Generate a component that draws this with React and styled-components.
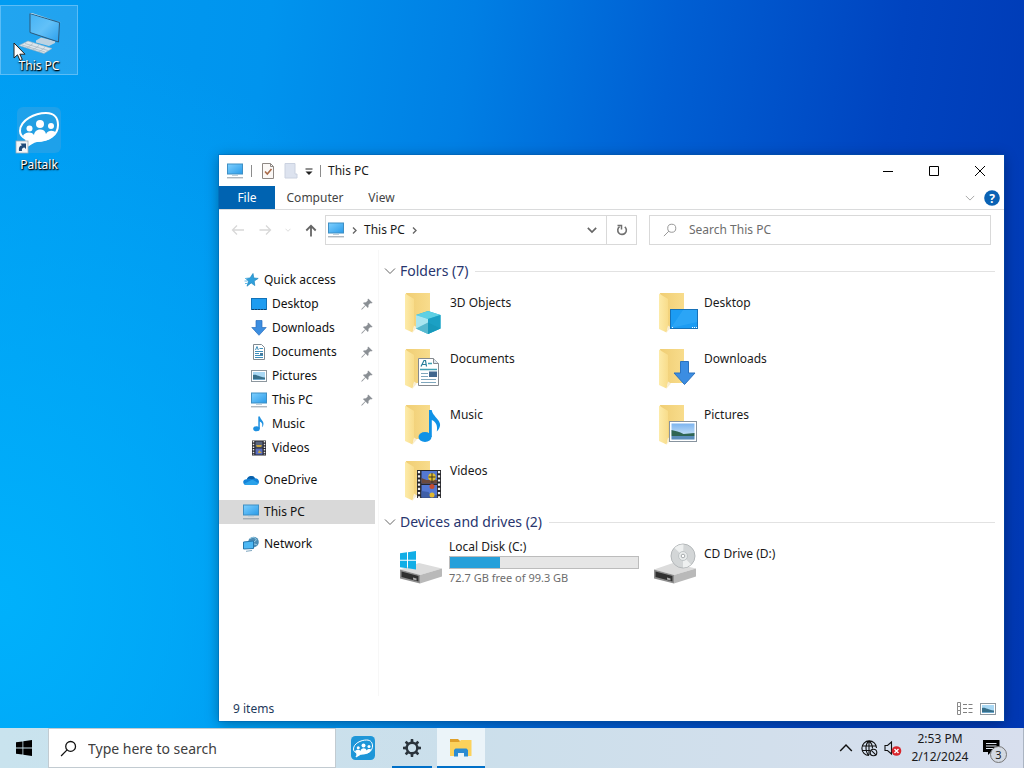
import React from 'react';
import styled, { createGlobalStyle } from 'styled-components';

const GlobalStyle = createGlobalStyle`
  * { box-sizing: border-box; }
  body {
    margin: 0;
    font-family: "Noto Sans", "Open Sans", sans-serif;
    font-size: 12px;
    line-height: 16px;
    color: #1a1a1a;
  }
  button, input { font: inherit; color: inherit; border: 0; padding: 0; margin: 0; background: none; }
  svg { display: block; flex: none; }
  ul { list-style: none; margin: 0; padding: 0; }
  h1, h2, p { margin: 0; font-weight: 400; }
`;

/* ---------- Desktop ---------- */

const Desktop = styled.div`
  position: relative;
  display: flex;
  flex-direction: column;
  min-height: 100vh;
  overflow: hidden;
  background:
    radial-gradient(ellipse 50% 75% at 0% 78%, rgba(0, 178, 252, 0.95), rgba(0, 170, 250, 0) 100%),
    linear-gradient(98deg, #009cf2 0%, #0094ee 24%, #007fe4 42%, #005fd3 60%, #0044c0 80%, #0037b2 100%);
`;

const Shortcuts = styled.main`
  flex: 1;
  display: flex;
  flex-direction: column;
  align-items: flex-start;
  gap: 29px;
  padding-top: 5px;
`;

const Shortcut = styled.button`
  display: flex;
  flex-direction: column;
  align-items: center;
  justify-content: flex-end;
  gap: 2px;
  width: 78px;
  height: 70px;
  color: #fff;
  border: 1px solid ${p => (p.$selected ? 'rgba(130, 205, 250, 0.6)' : 'transparent')};
  background: ${p => (p.$selected ? 'rgba(110, 185, 235, 0.3)' : 'transparent')};
  text-shadow: 0 1px 2px #000, 1px 1px 1px #000;
`;

const Cursor = styled.div`
  position: absolute;
  left: 13px;
  top: 42px;
`;

/* ---------- Explorer window ---------- */

const Window = styled.section`
  position: absolute;
  left: 219px;
  top: 155px;
  right: 20px;
  bottom: 47px;
  display: flex;
  flex-direction: column;
  background: #fff;
  box-shadow: 0 0 0 1px rgba(0, 90, 170, 0.35), 0 2px 12px rgba(0, 0, 0, 0.35);
`;

const TitleBar = styled.header`
  display: flex;
  align-items: center;
  height: 31px;
  padding: 0 1px 0 7px;
`;

const QuickTools = styled.div`
  display: flex;
  align-items: center;
  gap: 7px;
`;

const Divider = styled.span`
  width: 1px;
  height: 12px;
  background: #8c8c8c;
`;

const Title = styled.h1`
  flex: 1;
  padding-left: 7px;
  font-size: 12px;
`;

const IconButton = styled.button`
  display: flex;
  align-items: center;
  justify-content: center;
  width: ${p => p.$w || 16}px;
  height: ${p => p.$h || 16}px;
`;

const Tabs = styled.nav`
  display: flex;
  align-items: stretch;
  height: 24px;
  padding-right: 4px;
  border-bottom: 1px solid #dadbdc;
`;

const Tab = styled.button`
  width: ${p => p.$w}px;
  color: ${p => (p.$active ? '#fff' : '#444')};
  background: ${p => (p.$active ? '#0063b1' : 'transparent')};
`;

const Spacer = styled.span`
  flex: 1;
`;

const AddressRow = styled.div`
  display: flex;
  align-items: center;
  height: 40px;
  padding: 0 13px 0 11px;
`;

const HistoryButtons = styled.div`
  display: flex;
  align-items: center;
  gap: 11px;
  width: 95px;
`;

const AddressBox = styled.div`
  flex: 1;
  display: flex;
  align-items: stretch;
  height: 30px;
  border: 1px solid #d9d9d9;
`;

const Crumbs = styled.div`
  flex: 1;
  display: flex;
  align-items: center;
  gap: 5px;
  padding: 0 6px 0 1px;
`;

const RefreshButton = styled(IconButton)`
  border-left: 1px solid #d9d9d9;
  height: auto;
`;

const SearchBox = styled.label`
  flex: 0 1 342px;
  display: flex;
  align-items: center;
  gap: 12px;
  height: 30px;
  margin-left: 12px;
  padding: 0 13px;
  border: 1px solid #d9d9d9;
`;

const TextInput = styled.input`
  flex: 1;
  min-width: 0;
  outline: none;
  &::placeholder { color: ${p => p.$tone}; opacity: 1; }
`;

const Body = styled.div`
  flex: 1;
  display: flex;
  min-height: 0;
`;

const Sidebar = styled.nav`
  width: 160px;
  padding: 18px 3px 0 0;
  border-right: 1px solid #f7f7f7;
`;

const NavGroup = styled.ul`
  margin-bottom: 8px;
`;

const NavItem = styled.li`
  display: flex;
  align-items: center;
  height: 24px;
  padding: 0 2px 0 ${p => (p.$child ? 31 : 23)}px;
  background: ${p => (p.$selected ? '#d9d9d9' : 'transparent')};
`;

const NavLink = styled.a`
  flex: 1;
  display: flex;
  align-items: center;
  gap: 4px;
  color: #111;
  text-decoration: none;
`;

const NavIcon = styled.span`
  display: flex;
  justify-content: center;
  width: 18px;
`;

const Content = styled.div`
  flex: 1;
  padding: 10px 9px 0 5px;
`;

const GroupHeader = styled.h2`
  display: flex;
  align-items: center;
  gap: 4px;
  height: 22px;
  font-size: 14px;
  color: #28356e;
  &::after {
    content: '';
    flex: 1;
    height: 1px;
    margin-left: 3px;
    background: #e2e2e2;
  }
`;

const Tiles = styled.ul`
  display: grid;
  grid-template-columns: 254px 254px;
  grid-auto-rows: ${p => (p.$drives ? 56 : 56)}px;
  padding: ${p => (p.$drives ? '8px' : '10px')} 0 0 16px;
  margin-bottom: ${p => (p.$drives ? 0 : -5)}px;
`;

const Tile = styled.li`
  display: flex;
  gap: 6px;
  align-items: flex-start;
`;

const TileText = styled.div`
  flex: 1;
  padding: ${p => (p.$drive ? 5 : 3)}px 15px 0 0;
`;

const DriveText = styled.div`
  flex: 1;
  margin: -2px 15px 0 -1px;
`;

const CapacityBar = styled.div`
  height: 13px;
  margin: 1px 0;
  border: 1px solid #bcbcbc;
  background: #e6e6e6;
`;

const CapacityFill = styled.div`
  height: 100%;
  background: #26a0da;
`;

const Muted = styled.p`
  font-size: 11px;
  color: #6d6d6d;
`;

const StatusBar = styled.footer`
  display: flex;
  align-items: center;
  gap: 7px;
  height: 25px;
  padding: 0 8px 0 14px;
  color: #1e395b;
`;

/* ---------- Taskbar ---------- */

const Taskbar = styled.footer`
  position: relative;
  display: flex;
  align-items: stretch;
  height: 40px;
  background: linear-gradient(90deg, #c9e3ee 0%, #cbdfeb 45%, #d2dfec 75%, #d8dfee 100%);
`;

const TaskButton = styled.button`
  display: flex;
  align-items: center;
  justify-content: center;
  width: ${p => p.$w || 48}px;
  margin-left: ${p => p.$gap || 0}px;
  background: ${p => (p.$focused ? '#ebf4f9' : 'transparent')};
  border-bottom: 2px solid ${p => (p.$running ? '#0070c8' : 'transparent')};
  border-top: 2px solid transparent;
`;

const TaskSearch = styled.label`
  display: flex;
  align-items: center;
  gap: 11px;
  width: 288px;
  padding: 1px 11px 0;
  background: #fff;
  border: 1px solid #c2cbd1;
  font-size: 14px;
  line-height: 20px;
`;

const Tray = styled.div`
  display: flex;
  align-items: center;
  gap: 7px;
  margin-left: auto;
`;

const Clock = styled.time`
  width: 62px;
  display: flex;
  flex-direction: column;
  align-items: center;
  line-height: 18px;
  white-space: nowrap;
`;

const Notifications = styled.button`
  position: relative;
  width: 46px;
  height: 40px;
  padding-left: 5px;
  border-right: 1px solid #aab4c2;
`;

const Badge = styled.span`
  position: absolute;
  left: 12px;
  top: 18px;
  width: 17px;
  height: 17px;
  border: 1px solid #777;
  border-radius: 50%;
  background: #d3d9e2;
  font-size: 11px;
  line-height: 15px;
  text-align: center;
`;

/* ---------- Icons ---------- */

const MonitorIcon = () => (
  <svg width="18" height="16" viewBox="0 0 18 16">
    <defs>
      <linearGradient id="screen" x1="0" y1="0" x2="1" y2="1">
        <stop offset="0" stopColor="#7fd0ff" />
        <stop offset="1" stopColor="#2a9be8" />
      </linearGradient>
    </defs>
    <rect x="1.5" y="1" width="15" height="10" fill="url(#screen)" stroke="#3f8fc4" />
    <path d="M6 12.500h6" stroke="#c3d0d9" />
    <path d="M1 14.800h16" stroke="#8e9ba5" />
  </svg>
);

const StarIcon = () => (
  <svg width="16" height="16" viewBox="0 0 16 16">
    <path d="M10 1.500 10.800 6l4.400.4-4 2.600.6 4.600-3.600-2.700-4.200 3.300 1.500-4.900-2.700-2.900 4.200-.4z" fill="#2fa0dc" stroke="#2187be" strokeWidth=".7" />
    <path d="M2 6.500h2.500M1.500 9h3M2 11.500h2.500" stroke="#69bce8" />
  </svg>
);

const DesktopIcon = () => (
  <svg width="16" height="16" viewBox="0 0 16 16">
    <rect x=".5" y="2.500" width="15" height="11" fill="#1e9cf0" stroke="#1272b8" />
    <path d="M1 13.500h14" stroke="#123f66" strokeDasharray="2 1" />
  </svg>
);

const DownloadIcon = () => (
  <svg width="16" height="16" viewBox="0 0 16 16">
    <path d="M5 .5h6v7h4.2L8 15.300.8 7.500H5z" fill="#3c8ee0" stroke="#2a6fbd" strokeWidth=".7" />
  </svg>
);

const DocumentIcon = () => (
  <svg width="16" height="16" viewBox="0 0 16 16">
    <path d="M2.500.500h8l3 3v12h-11z" fill="#fff" stroke="#7f8a91" />
    <path d="M4.500 6 6 2.500 7.300 6M8.500 4.500H12M4 7.500h8M4 9.500h4M4 11.500h8M4 13.500h8" stroke="#3f8fbb" fill="none" />
    <rect x="9" y="9" width="3" height="2" fill="#47799b" />
  </svg>
);

const PictureIcon = () => (
  <svg width="16" height="16" viewBox="0 0 16 16">
    <rect x=".5" y="2.500" width="15" height="11" fill="#fff" stroke="#8d979e" />
    <rect x="2" y="4" width="12" height="8" fill="#a9d8f4" />
    <path d="M2 7c3-1 5 1.500 12 2.500V12H2z" fill="#376f8a" />
    <path d="M2 11h12v1H2z" fill="#6ea8cc" />
  </svg>
);

const NoteIcon = () => (
  <svg width="16" height="16" viewBox="0 0 16 16">
    <ellipse cx="5.500" cy="12.800" rx="3.300" ry="2.500" fill="#1e90e0" />
    <path d="M7.300.500h1.600c.3 3 4.600 4.500 3.400 8.700-.3 1-.8 1.600-1.300 2 .8-2.900.3-4.500-2.200-5.700v7.300H7.300z" fill="#1e90e0" />
  </svg>
);

const FilmIcon = () => (
  <svg width="16" height="16" viewBox="0 0 16 16">
    <rect x="1" y=".5" width="14" height="15" fill="#27272f" />
    <path d="M2.500 1v14M13.500 1v14" stroke="#e8e8e8" strokeWidth="1.500" strokeDasharray="1.500 1.200" />
    <rect x="4.500" y="1.500" width="7" height="6" fill="#59647e" />
    <rect x="4.500" y="8.500" width="7" height="6" fill="#5a6fc0" />
    <path d="M5 5h6l-1 2H6zM8 10l3 3H7z" fill="#c9a63c" />
  </svg>
);

const CloudIcon = () => (
  <svg width="16" height="16" viewBox="0 0 16 16">
    <path d="M3.800 7.200a4.600 4.600 0 0 1 8.300-.9c2.400 0 3.900 1.700 3.900 3.500S14.500 13 12.800 13H3.400A3.200 3.200 0 0 1 .2 10c0-1.600 1.400-2.900 3.600-2.800z" fill="#1383d8" />
    <path d="M3.800 7.200a4.600 4.600 0 0 1 8.300-.9c-1.200.2-2 .6-2.800 1.300-1.500-.9-3.300-1-5.500-.4z" fill="#0a5fa8" />
    <path d="M1 12 9.300 7.600l6.200 3.700c-.6 1-1.600 1.700-2.700 1.700H3.400C2.400 13 1.600 12.700 1 12z" fill="#2aa2ea" />
  </svg>
);

const NetworkIcon = () => (
  <svg width="16" height="16" viewBox="0 0 16 16">
    <circle cx="10.500" cy="6" r="5.300" fill="#4b8bb3" />
    <path d="M7 3c2-2.500 5-1.500 6 0s-1 2-2 3M9 8c2 0 4 0 5 1" stroke="#9bd0e9" fill="none" />
    <path d="m.5 6 10-1v7.500l-10 .5z" fill="#4db8f4" stroke="#2577ad" />
    <path d="m3 15.300 6-.8" stroke="#7ea6bf" />
  </svg>
);

const PinIcon = () => (
  <svg width="12" height="12" viewBox="0 0 12 12">
    <path d="m7.300.800 4 4-1.200.5-.8-.2-2 2c.3 1.100.1 2-.5 2.700L4.600 7.600 1.200 11.200l-.6.2.2-.7 3.500-3.400L2.100 5c.8-.6 1.700-.7 2.800-.4l2-2-.2-.8z" fill="#8a8f94" stroke="#8a8f94" strokeWidth=".3" />
  </svg>
);

const Chevron = ({ dir = 'down', size = 12, color = '#666', weight = 1 }) => {
  const paths = { down: 'M1 3.500 6 8.500 11 3.500', up: 'M1 8.500 6 3.500 11 8.500', right: 'M4 2 8 6 4 10' };
  return (
    <svg width={size} height={size} viewBox="0 0 12 12">
      <path d={paths[dir]} fill="none" stroke={color} strokeWidth={weight} />
    </svg>
  );
};

const Arrow = ({ dir, color, weight = 1.3 }) => {
  const paths = {
    left: 'M14 8H3M7 3.500 2.500 8 7 12.500',
    right: 'M2.500 8h11M9 3.500 13.500 8 9 12.500',
    up: 'M8 14.500V4M3.300 8.500 8 3.800l4.700 4.700',
  };
  return (
    <svg width="16" height="16" viewBox="0 0 16 16">
      <path d={paths[dir]} fill="none" stroke={color} strokeWidth={weight} />
    </svg>
  );
};

const CheckPageIcon = () => (
  <svg width="16" height="16" viewBox="0 0 16 16">
    <path d="M2.500.500h8l3 3v12h-11z" fill="#fbf8f6" stroke="#8e8884" />
    <path d="M10.500.500v3h3" fill="none" stroke="#8e8884" />
    <path d="m5 8.500 2.300 2.500L11.500 6" fill="none" stroke="#a86a48" strokeWidth="1.600" />
  </svg>
);

const NewFolderIcon = () => (
  <svg width="14" height="16" viewBox="0 0 14 16">
    <path d="M1 .5h10v10.500h2v4H1z" fill="#dde3ef" stroke="#cbd2e0" />
  </svg>
);

const MoreIcon = () => (
  <svg width="8" height="8" viewBox="0 0 8 8">
    <path d="M.5 2h7" stroke="#222" />
    <path d="M.5 4.500h7L4 8z" fill="#222" />
  </svg>
);

const LensIcon = ({ size, color, weight = 1 }) => (
  <svg width={size} height={size} viewBox="0 0 16 16">
    <circle cx="10" cy="6" r="4.600" fill="none" stroke={color} strokeWidth={weight} />
    <path d="M6.700 9.300 1 15" stroke={color} strokeWidth={weight} />
  </svg>
);

const RefreshIcon = () => (
  <svg width="14" height="14" viewBox="0 0 14 14">
    <path d="M4.600 3.600a4.300 4.300 0 1 0 5.200.2" fill="none" stroke="#707070" strokeWidth="1.600" />
    <path d="M2.500 2.500h4v4" fill="none" stroke="#707070" strokeWidth="1.500" />
  </svg>
);

const HelpIcon = () => (
  <svg width="16" height="16" viewBox="0 0 16 16">
    <circle cx="8" cy="8" r="7.800" fill="#0a62b4" />
    <text x="8" y="12.500" textAnchor="middle" fontSize="12" fontWeight="700" fill="#fff">?</text>
  </svg>
);

const DetailsViewIcon = () => (
  <svg width="17" height="14" viewBox="0 0 17 14">
    <path d="M1.500.500h3v4h-3zM1.500 4.500h3v4h-3zM1.500 8.500h3v4h-3z" fill="none" stroke="#8a8a8a" />
    <path d="M7 2.500h4M7 6.500h4M7 10.500h4M12.500 2.500h4M12.500 6.500h4M12.500 10.500h4" stroke="#808080" />
  </svg>
);

const overlays = {
  objects: (
    <>
      <path d="m16 23 12-4 12.500 4v13.500L28 42l-12-5.500z" fill="#25b3d3" />
      <path d="m16 23 12-4 12.500 4L28 27z" fill="#5dd0e4" />
      <path d="m16 23 12 4v15l-12-5.500z" fill="#a8e6f0" />
      <path d="m28 27 12.500-4v13.500L28 42z" fill="#1ba0c4" />
      <path d="m16 36.500 12-6 12.500 6L28 42z" fill="#1493b5" opacity=".55" />
    </>
  ),
  documents: (
    <>
      <path d="M18.500 10.500h15l5 5v22h-20z" fill="#fff" stroke="#858a90" />
      <path d="M33.500 10.500v5h5" fill="#dce6ee" stroke="#858a90" />
      <path d="m21 18.500 3-6h1.500l1 6M22.500 16.500H26" stroke="#287f9b" fill="none" strokeWidth="1.200" />
      <path d="M28 15.500h4M20 21.500h17" stroke="#3fa0b4" strokeWidth="1.500" />
      <path d="M21 25.500h7M21 28.500h7M21 31.500h15M21 34.500h15" stroke="#7fa7bd" />
      <rect x="29" y="23.500" width="8" height="5.500" fill="#41678e" />
    </>
  ),
  music: (
    <>
      <ellipse cx="25" cy="33" rx="6.500" ry="5" fill="#1092e6" />
      <path d="M29 6h2.700c1 7 11.500 11 7.600 18-.7 1.400-1.500 2.500-2.500 3.500 1-6-.7-9.500-5-11.500V33H29z" fill="#1092e6" />
    </>
  ),
  videos: (
    <>
      <rect x="17" y="10" width="24" height="28" fill="#27272c" />
      <path d="M19 11v27M39 11v27" stroke="#f2f2f2" strokeWidth="2.200" strokeDasharray="2.200 2" />
      <rect x="21.500" y="11" width="15.500" height="12.500" fill="#5478d2" />
      <rect x="21.500" y="25" width="15.500" height="12.500" fill="#5478d2" />
      <path d="m21.500 18 5 2h10.500v3.500H21.500z" fill="#6c4a3b" />
      <circle cx="32" cy="17" r="3.800" fill="#e3bf30" />
      <path d="M28.500 17h7M32 13v8M31 22h2.500" stroke="#3c341f" />
      <circle cx="32" cy="26.500" r="2.500" fill="#c74c30" />
      <path d="m21.500 31 7 1 2 3h6.500v2.500H21.500z" fill="#3f5fa8" />
      <circle cx="32" cy="35" r="2.500" fill="#e0b82e" />
    </>
  ),
  desktop: (
    <>
      <rect x="16.500" y="17.500" width="27" height="19" fill="#1c9cf3" stroke="#1671b8" />
      <path d="m17 36 12-18h14v12z" fill="#3db2fa" opacity=".45" />
      <path d="M18 35.500h1.500M38 35.500h5" stroke="#fff" strokeDasharray="1 1" />
    </>
  ),
  downloads: <path d="M26.500 13.500h8v11.500h6.500L30.500 36.500 20 25h6.500z" fill="#3b8de2" stroke="#2b72be" />,
  pictures: (
    <>
      <defs>
        <linearGradient id="sky" x1="0" y1="0" x2="0" y2="1">
          <stop offset="0" stopColor="#7cb4ef" />
          <stop offset="1" stopColor="#dff0fa" />
        </linearGradient>
      </defs>
      <rect x="15.500" y="17.500" width="27" height="20" fill="#fff" stroke="#87939e" />
      <rect x="17.500" y="19.500" width="23" height="16" fill="url(#sky)" />
      <path d="M17.500 26c4 1 8 1.500 12 4l11-1V32h-23z" fill="#2f6553" />
      <path d="M17.500 32h23v3.500h-23z" fill="#5b8dbb" />
    </>
  ),
};

const FolderIcon = ({ kind }) => (
  <svg width="44" height="44" viewBox="0 0 44 44">
    <defs>
      <linearGradient id="back" x1="0" y1="0" x2="1" y2="0">
        <stop offset="0" stopColor="#f0ce74" />
        <stop offset="1" stopColor="#f8dc8c" />
      </linearGradient>
      <linearGradient id="flap" x1="0" y1="0" x2="1" y2="0">
        <stop offset="0" stopColor="#fdeba9" />
        <stop offset="1" stopColor="#f8dc8a" />
      </linearGradient>
    </defs>
    <path d="M6 1h24v34H10z" fill="url(#back)" />
    <path d="M5 1.500 14 7v28l-1.500 5.500L5 37z" fill="url(#flap)" />
    <path d="m12.500 40.500 1.500-7 3 2z" fill="#f8edd0" />
    {overlays[kind]}
  </svg>
);

const DriveBase = () => (
  <>
    <path d="M0 28.500 19 22l23 5.500L20 34z" fill="#dcdcdc" />
    <path d="M20 34l22-6.500v8L20 42.500z" fill="#b9b9b9" />
    <path d="M0 28.500 20 34v8.500L0 37.500z" fill="#8e8e8e" />
    <path d="m1.500 30.500 17 4.500v5.500l-17-4.500z" fill="#303030" />
    <path d="m13 36.500 3.500 1v2L13 38.500z" fill="#aaa" />
  </>
);

const LocalDiskIcon = () => (
  <svg width="44" height="44" viewBox="0 0 44 44">
    <DriveBase />
    <path d="M0 12.300 7 11.300v7.500H0zM8 11.200l8-1.200v8.800H8zM0 19.800h7v7.400l-7-1zM8 19.800h8v8.600l-8-1.100z" fill="#12aee6" />
  </svg>
);

const CdDriveIcon = () => (
  <svg width="44" height="44" viewBox="0 0 44 44">
    <DriveBase />
    <circle cx="29" cy="15" r="12" fill="#d3d6d7" stroke="#b4b8ba" />
    <path d="M29 15 20.500 7a12 12 0 0 1 9-3.500zM29 15l8 8.500a12 12 0 0 1-8 3z" fill="#eef0f0" />
    <circle cx="29" cy="15" r="4.500" fill="#e9ecec" stroke="#bfc4c6" />
    <circle cx="29" cy="15" r="1.800" fill="#fff" stroke="#a6abad" />
  </svg>
);

const LargePcIcon = () => (
  <svg width="46" height="44" viewBox="0 0 46 44">
    <defs>
      <linearGradient id="bigscreen" x1="0" y1="0" x2="1" y2="1">
        <stop offset="0" stopColor="#45b3f5" />
        <stop offset=".5" stopColor="#62c1f8" />
        <stop offset="1" stopColor="#2a9eec" />
      </linearGradient>
    </defs>
    <path d="m20 28.500 5-3 14 3.500v2l-6 3-13-3.500z" fill="#bcd3e2" />
    <path d="M14 1.500 43.500 10.500 42.500 30 14 20.500z" fill="url(#bigscreen)" stroke="#2d5878" />
    <path d="M13.500 1 44 10l1 .5L16 1z" fill="#d6e4ec" />
    <path d="m3 33.500 9-4.500 24 7.500-8 5z" fill="#dce6ec" stroke="#9cb0bd" strokeWidth=".6" />
    <path d="m6 33 23 7M9 31.500l23 7M11 36l6-4.500M17 38l6-4.500M23 40l6-4.500" stroke="#a3b4c0" strokeWidth=".7" />
  </svg>
);

const PaltalkGlyph = ({ fill }) => (
  <>
    <path d="M5 24C5 13 20 6 31 6c9 0 12 6 12 12 0 10-9 16-21 16-4 0-7 4-12 6 2-4 2-6 1-8-4-2-6-4-6-8z" fill={fill} stroke="#fff" strokeWidth="2" strokeLinejoin="round" />
    <circle cx="25" cy="17" r="4" fill="#fff" />
    <circle cx="14.500" cy="21.500" r="3" fill="#fff" />
    <circle cx="36" cy="19" r="3" fill="#fff" />
    <path d="M8 29c1-4 9-5 11-1 1-7 11-7 12-1 2-4 8-4 10-1-4 6-10 8.500-19 8.500-4 0-7 3.500-11 5 1-3 2-6-3-10.500z" fill="#fff" />
  </>
);

const PaltalkIcon = () => (
  <svg width="48" height="48" viewBox="0 0 48 48">
    <rect x="2" y="0" width="44" height="46" rx="6" fill="#3ba4e2" opacity=".5" />
    <PaltalkGlyph fill="#229fe3" />
    <rect x="1" y="34" width="12" height="12" fill="#f3f6f8" stroke="#9cacb8" strokeWidth=".8" />
    <path d="M4 44c-.5-4 1-5.500 3-5.500L5.500 36.500H11V42L9.500 40.500C7.500 40.500 6.500 42 7 44z" fill="#204a78" />
  </svg>
);

const PaltalkTaskIcon = () => (
  <svg width="24" height="24" viewBox="0 0 48 48">
    <rect width="48" height="48" rx="9" fill="#1e96d8" />
    <g transform="translate(0 2)"><PaltalkGlyph fill="#1e96d8" /></g>
  </svg>
);

const CursorIcon = () => (
  <svg width="14" height="20" viewBox="0 0 14 20">
    <path d="M1 1v15l3.500-3.200L7 18.500l2.300-1-2.500-5.300H12z" fill="#fff" stroke="#222" />
  </svg>
);

const StartIcon = () => (
  <svg width="16" height="16" viewBox="0 0 16 16">
    <path d="M0 2.300 6.500 1.400v6.200H0zM7.300 1.300 16 0v7.600H7.300zM0 8.400h6.500v6.200L0 13.700zM7.300 8.400H16V16l-8.700-1.300z" fill="#000" />
  </svg>
);

const GearIcon = () => (
  <svg width="20" height="20" viewBox="0 0 20 20">
    <circle cx="10" cy="10" r="5.300" fill="none" stroke="#2b343c" strokeWidth="2.400" />
    {[0, 45, 90, 135, 180, 225, 270, 315].map(a => (
      <path key={a} d="M8.500 4.500 8.800 1h2.400l.3 3.500z" fill="#2b343c" transform={`rotate(${a} 10 10)`} />
    ))}
  </svg>
);

const ExplorerIcon = () => (
  <svg width="22" height="20" viewBox="0 0 22 20">
    <path d="M0 1h8l2 2h11v6H0z" fill="#dfa02a" />
    <path d="M0 4h9l2-2h10.500v16H0z" fill="#fcd25c" />
    <path d="M4 18.500V12l1.500-1.500h11L18 12v6.500h-4V15H8v3.500z" fill="#2c8cd2" />
    <path d="M8 18.500V15h6v3.500z" fill="#ebf4f9" />
  </svg>
);

const GlobeIcon = () => (
  <svg width="17" height="17" viewBox="0 0 17 17">
    <g fill="none" stroke="#111" strokeWidth="1.100">
      <path d="M15.500 8A7.300 7.300 0 1 0 8 15.500M8 15.500C4 12 4 4 8 1c2.500 2 3.500 4.500 3.500 7.500M1 6h14M1 10.500h8M8 1v14" />
      <circle cx="12.500" cy="12.500" r="3.300" />
      <path d="m10.300 10.300 4.500 4.500" />
    </g>
  </svg>
);

const MutedSpeakerIcon = () => (
  <svg width="18" height="16" viewBox="0 0 18 16">
    <path d="M1 5.500h2.500L7.500 2v12l-4-3.500H1z" fill="none" stroke="#111" strokeWidth="1.100" />
    <circle cx="12.500" cy="11" r="4.800" fill="#d8262c" />
    <path d="m10.500 9 4 4m0-4-4 4" stroke="#fff" strokeWidth="1.400" />
  </svg>
);

const ChatIcon = () => (
  <svg width="17" height="17" viewBox="0 0 17 17">
    <path d="M0 0h16.500v12H8l-3 3v-3H0z" fill="#000" />
    <path d="M3 3.500h10.500M3 6h10.500M3 8.500h7" stroke="#dde4ee" />
  </svg>
);

/* ---------- Data ---------- */

const quickLinks = [
  { label: 'Desktop', Icon: DesktopIcon, pinned: true },
  { label: 'Downloads', Icon: DownloadIcon, pinned: true },
  { label: 'Documents', Icon: DocumentIcon, pinned: true },
  { label: 'Pictures', Icon: PictureIcon, pinned: true },
  { label: 'This PC', Icon: MonitorIcon, pinned: true },
  { label: 'Music', Icon: NoteIcon },
  { label: 'Videos', Icon: FilmIcon },
];

const folders = [
  ['3D Objects', 'objects'],
  ['Desktop', 'desktop'],
  ['Documents', 'documents'],
  ['Downloads', 'downloads'],
  ['Music', 'music'],
  ['Pictures', 'pictures'],
  ['Videos', 'videos'],
];

const drive = { total: 99.3, free: 72.7 };

const NavEntry = ({ label, Icon, child, selected, pinned }) => (
  <NavItem $child={child} $selected={selected}>
    <NavLink href="#">
      <NavIcon><Icon /></NavIcon>
      {label}
    </NavLink>
    {pinned && <PinIcon />}
  </NavItem>
);

export default function App() {
  return (
    <Desktop>
      <GlobalStyle />
      <Shortcuts>
        <Shortcut $selected>
          <LargePcIcon />
          This PC
        </Shortcut>
        <Shortcut>
          <PaltalkIcon />
          Paltalk
        </Shortcut>
      </Shortcuts>
      <Cursor><CursorIcon /></Cursor>

      <Window aria-label="This PC">
        <TitleBar>
          <QuickTools>
            <MonitorIcon />
            <Divider />
            <IconButton $w={18} aria-label="Properties"><CheckPageIcon /></IconButton>
            <IconButton $w={14} aria-label="New folder"><NewFolderIcon /></IconButton>
            <IconButton $w={8} aria-label="Customize toolbar"><MoreIcon /></IconButton>
            <Divider />
          </QuickTools>
          <Title>This PC</Title>
          <IconButton $w={46} $h={30} aria-label="Minimize">
            <svg width="10" height="10"><path d="M0 5.500h10" stroke="#000" /></svg>
          </IconButton>
          <IconButton $w={46} $h={30} aria-label="Maximize">
            <svg width="10" height="10"><path d="M.5.5h9v9h-9z" fill="none" stroke="#000" /></svg>
          </IconButton>
          <IconButton $w={46} $h={30} aria-label="Close">
            <svg width="10" height="10"><path d="m0 0 10 10M10 0 0 10" stroke="#000" /></svg>
          </IconButton>
        </TitleBar>

        <Tabs>
          <Tab $w={56} $active>File</Tab>
          <Tab $w={80}>Computer</Tab>
          <Tab $w={53}>View</Tab>
          <Spacer />
          <IconButton $w={28} $h={23} aria-label="Expand ribbon"><Chevron size={10} color="#999" /></IconButton>
          <IconButton $h={23} aria-label="Help"><HelpIcon /></IconButton>
        </Tabs>

        <AddressRow>
          <HistoryButtons>
            <IconButton aria-label="Back"><Arrow dir="left" color="#d8d8d8" /></IconButton>
            <IconButton aria-label="Forward"><Arrow dir="right" color="#d8d8d8" /></IconButton>
            <IconButton $w={8} aria-label="Recent locations"><Chevron size={6} color="#bbb" /></IconButton>
            <IconButton aria-label="Up"><Arrow dir="up" color="#666" weight={1.8} /></IconButton>
          </HistoryButtons>
          <AddressBox>
            <Crumbs>
              <MonitorIcon />
              <Chevron dir="right" size={9} color="#666" weight={1.8} />
              <button>This PC</button>
              <Chevron dir="right" size={9} color="#666" weight={1.8} />
              <Spacer />
              <IconButton aria-label="Previous locations"><Chevron size={10} color="#666" weight={2} /></IconButton>
            </Crumbs>
            <RefreshButton $w={30} aria-label="Refresh"><RefreshIcon /></RefreshButton>
          </AddressBox>
          <SearchBox>
            <LensIcon size={14} color="#8a8a8a" />
            <TextInput $tone="#6d6d6d" aria-label="Search This PC" placeholder="Search This PC" />
          </SearchBox>
        </AddressRow>

        <Body>
          <Sidebar>
            <NavGroup>
              <NavEntry label="Quick access" Icon={StarIcon} />
              {quickLinks.map(item => <NavEntry key={item.label} child {...item} />)}
            </NavGroup>
            <NavGroup><NavEntry label="OneDrive" Icon={CloudIcon} /></NavGroup>
            <NavGroup><NavEntry label="This PC" Icon={MonitorIcon} selected /></NavGroup>
            <NavGroup><NavEntry label="Network" Icon={NetworkIcon} /></NavGroup>
          </Sidebar>

          <Content>
            <GroupHeader><Chevron />Folders (7)</GroupHeader>
            <Tiles>
              {folders.map(([label, kind]) => (
                <Tile key={label}>
                  <FolderIcon kind={kind} />
                  <TileText>{label}</TileText>
                </Tile>
              ))}
            </Tiles>
            <GroupHeader><Chevron />Devices and drives (2)</GroupHeader>
            <Tiles $drives>
              <Tile>
                <LocalDiskIcon />
                <DriveText>
                  <p>Local Disk (C:)</p>
                  <CapacityBar>
                    <CapacityFill style={{ width: `${((drive.total - drive.free) / drive.total) * 100}%` }} />
                  </CapacityBar>
                  <Muted>{drive.free} GB free of {drive.total} GB</Muted>
                </DriveText>
              </Tile>
              <Tile>
                <CdDriveIcon />
                <TileText $drive>CD Drive (D:)</TileText>
              </Tile>
            </Tiles>
          </Content>
        </Body>

        <StatusBar>
          9 items
          <Spacer />
          <IconButton $w={17} aria-label="Details view"><DetailsViewIcon /></IconButton>
          <IconButton aria-label="Large icons view"><PictureIcon /></IconButton>
        </StatusBar>
      </Window>

      <Taskbar>
        <TaskButton aria-label="Start"><StartIcon /></TaskButton>
        <TaskSearch>
          <LensIcon size={17} color="#111" weight={1.2} />
          <TextInput $tone="#404040" aria-label="Type here to search" placeholder="Type here to search" />
        </TaskSearch>
        <TaskButton $gap={3} aria-label="Paltalk"><PaltalkTaskIcon /></TaskButton>
        <TaskButton $w={40} $gap={5} $running aria-label="Settings"><GearIcon /></TaskButton>
        <TaskButton $gap={5} $running $focused aria-label="File Explorer"><ExplorerIcon /></TaskButton>
        <Tray>
          <IconButton aria-label="Show hidden icons"><Chevron dir="up" size={14} color="#111" weight={1.2} /></IconButton>
          <IconButton aria-label="Network status"><GlobeIcon /></IconButton>
          <IconButton $w={18} aria-label="Volume"><MutedSpeakerIcon /></IconButton>
          <Clock><span>2:53 PM</span><span>2/12/2024</span></Clock>
          <Notifications aria-label="Notifications, 3 new">
            <ChatIcon />
            <Badge>3</Badge>
          </Notifications>
        </Tray>
      </Taskbar>
    </Desktop>
  );
}
